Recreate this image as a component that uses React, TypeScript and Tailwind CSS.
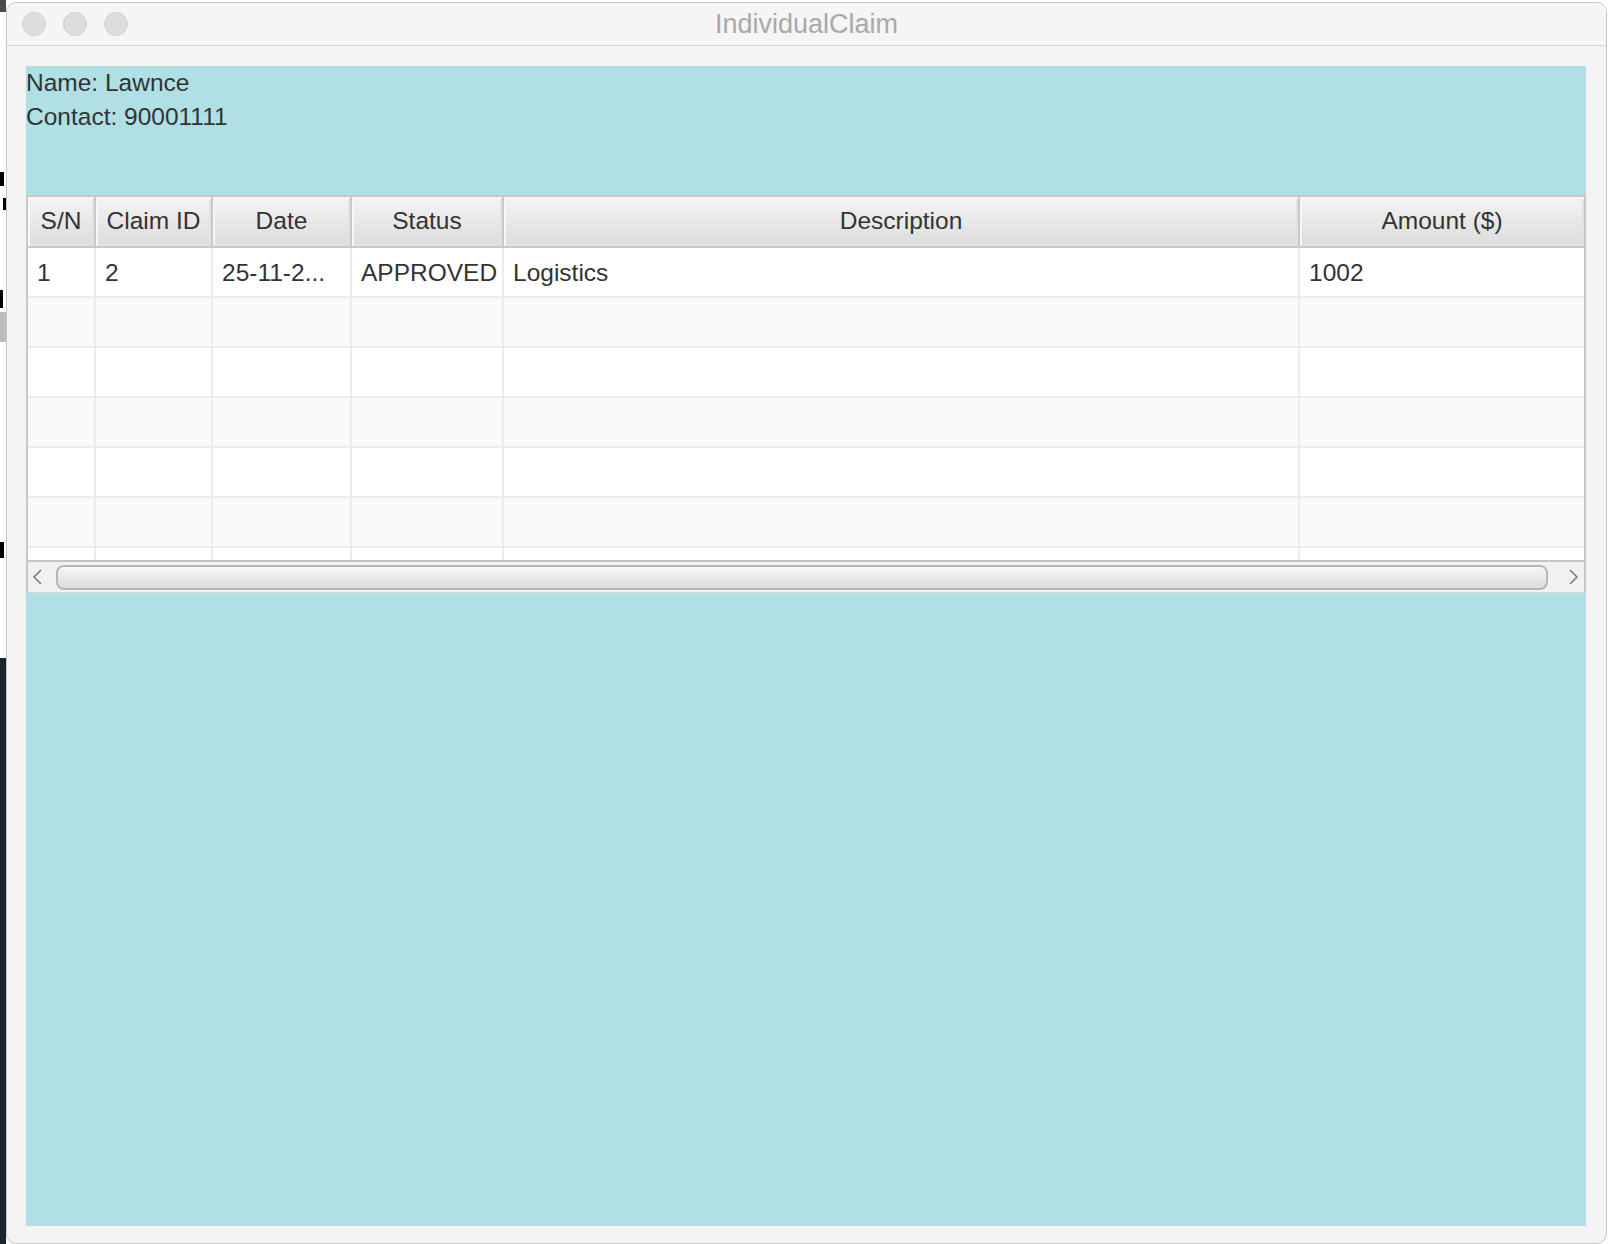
import React from 'react';

type Row = { sn: string; id: string; date: string; status: string; desc: string; amount: string };

const rows: Row[] = [
  { sn: '1', id: '2', date: '25-11-2...', status: 'APPROVED', desc: 'Logistics', amount: '1002' },
  { sn: '', id: '', date: '', status: '', desc: '', amount: '' },
  { sn: '', id: '', date: '', status: '', desc: '', amount: '' },
  { sn: '', id: '', date: '', status: '', desc: '', amount: '' },
  { sn: '', id: '', date: '', status: '', desc: '', amount: '' },
  { sn: '', id: '', date: '', status: '', desc: '', amount: '' },
  { sn: '', id: '', date: '', status: '', desc: '', amount: '' },
];

const headers = ['S/N', 'Claim ID', 'Date', 'Status', 'Description', 'Amount ($)'];

const cols = 'grid grid-cols-[68px_117px_139px_152px_796px_284px]';

const Chevron = ({ dir }: { dir: 'left' | 'right' }) => (
  <svg width="12" height="18" viewBox="0 0 12 18" fill="none">
    {dir === 'left' ? (
      <polyline points="9,2 2,9 9,16" stroke="#7c7c7c" strokeWidth="1.6" />
    ) : (
      <polyline points="3,2 10,9 3,16" stroke="#7c7c7c" strokeWidth="1.6" />
    )}
  </svg>
);

const App = () => {
  return (
    <div className="w-[1610px] h-[1244px] flex bg-white overflow-hidden font-['Liberation_Sans',Arial,sans-serif] text-[#333333]">
      {/* what is behind the window */}
      <div className="w-[6px] flex flex-col shrink-0">
        <div className="h-[12px] bg-black/70" />
        <div className="h-[160px] bg-white" />
        <div className="h-[14px] w-[4px] bg-black" />
        <div className="h-[12px] bg-white" />
        <div className="h-[12px] w-[3px] ml-[3px] bg-black" />
        <div className="h-[80px] bg-white" />
        <div className="h-[18px] w-[3px] bg-black" />
        <div className="h-[4px] bg-white" />
        <div className="h-[30px] bg-[#bdbdbd]" />
        <div className="h-[200px] bg-white" />
        <div className="h-[16px] w-[4px] bg-black" />
        <div className="h-[100px] bg-white" />
        <div className="flex-1 bg-[#1b2330]" />
      </div>

      {/* window */}
      <div className="w-[1601px] h-[1242px] mt-[2px] shrink-0 flex flex-col rounded-[10px] border border-[#c6c6c6] bg-[#f3f3f3] overflow-hidden">
        <div className="h-[43px] shrink-0 relative flex items-center bg-[#f5f5f5] border-b border-[#d6d6d6]">
          <div className="flex items-center gap-[17px] pl-[15px]">
            <div className="w-[24px] h-[24px] rounded-full bg-[#dddddd] border border-[#cfcfcf]" />
            <div className="w-[24px] h-[24px] rounded-full bg-[#dddddd] border border-[#cfcfcf]" />
            <div className="w-[24px] h-[24px] rounded-full bg-[#dddddd] border border-[#cfcfcf]" />
          </div>
          <div className="absolute inset-0 flex items-center justify-center text-[27px] text-[#a9a9a9] pointer-events-none">
            IndividualClaim
          </div>
        </div>

        <div className="pt-[20px] pl-[19px] pr-[20px]">
          <div className="h-[1160px] bg-[#b0e0e6] flex flex-col">
            <div className="text-[24.5px] leading-[34px]">
              <div>Name: Lawnce</div>
              <div>Contact: 90001111</div>
            </div>

            <div className="mt-[61px] border-2 border-b-0 border-[#c8c8c8] bg-white">
              {/* header */}
              <div className={`${cols} h-[51px] border-b-2 border-[#c8c8c8]`}>
                {headers.map((h, i) => (
                  <div
                    key={h}
                    className={`flex items-center justify-center text-[24.5px] bg-gradient-to-b from-[#f4f4f4] to-[#dcdcdc] shadow-[inset_2px_2px_0_#f7f7f7,inset_-2px_-2px_0_#e2e2e2] ${
                      i < headers.length - 1 ? 'border-r-2 border-[#c8c8c8]' : ''
                    }`}
                  >
                    {h}
                  </div>
                ))}
              </div>

              {/* body */}
              <div className="h-[312px] overflow-hidden">
                {rows.map((r, i) => {
                  const cells = [r.sn, r.id, r.date, r.status, r.desc, r.amount];
                  return (
                    <div
                      key={i}
                      className={`${cols} h-[50px] shrink-0 border-b-2 border-[#ececec] ${i % 2 === 0 ? 'bg-white' : 'bg-[#f9f9f9]'}`}
                    >
                      {cells.map((c, j) => (
                        <div
                          key={j}
                          className={`flex items-center pl-[9px] pt-[2px] text-[24.5px] whitespace-nowrap overflow-hidden ${
                            j < cells.length - 1 ? 'border-r-2 border-[#ececec]' : ''
                          }`}
                        >
                          {c}
                        </div>
                      ))}
                    </div>
                  );
                })}
              </div>

              {/* horizontal scrollbar */}
              <div className="h-[33px] flex items-center bg-[#f1f1f1] border-t-2 border-b border-t-[#c4c4c4] border-b-[#d9d9d9]">
                <div className="w-[28px] h-full flex items-center pl-[4px]">
                  <Chevron dir="left" />
                </div>
                <div className="flex-1 h-[25px] rounded-[8px] border-2 border-[#b6b6b6] bg-gradient-to-b from-[#f7f7f7] to-[#dcdcdc]" />
                <div className="w-[36px] h-full flex items-center pl-[19px]">
                  <Chevron dir="right" />
                </div>
              </div>
            </div>
          </div>
        </div>
      </div>

      <div className="flex-1 bg-white" />
    </div>
  );
};

export default App;
